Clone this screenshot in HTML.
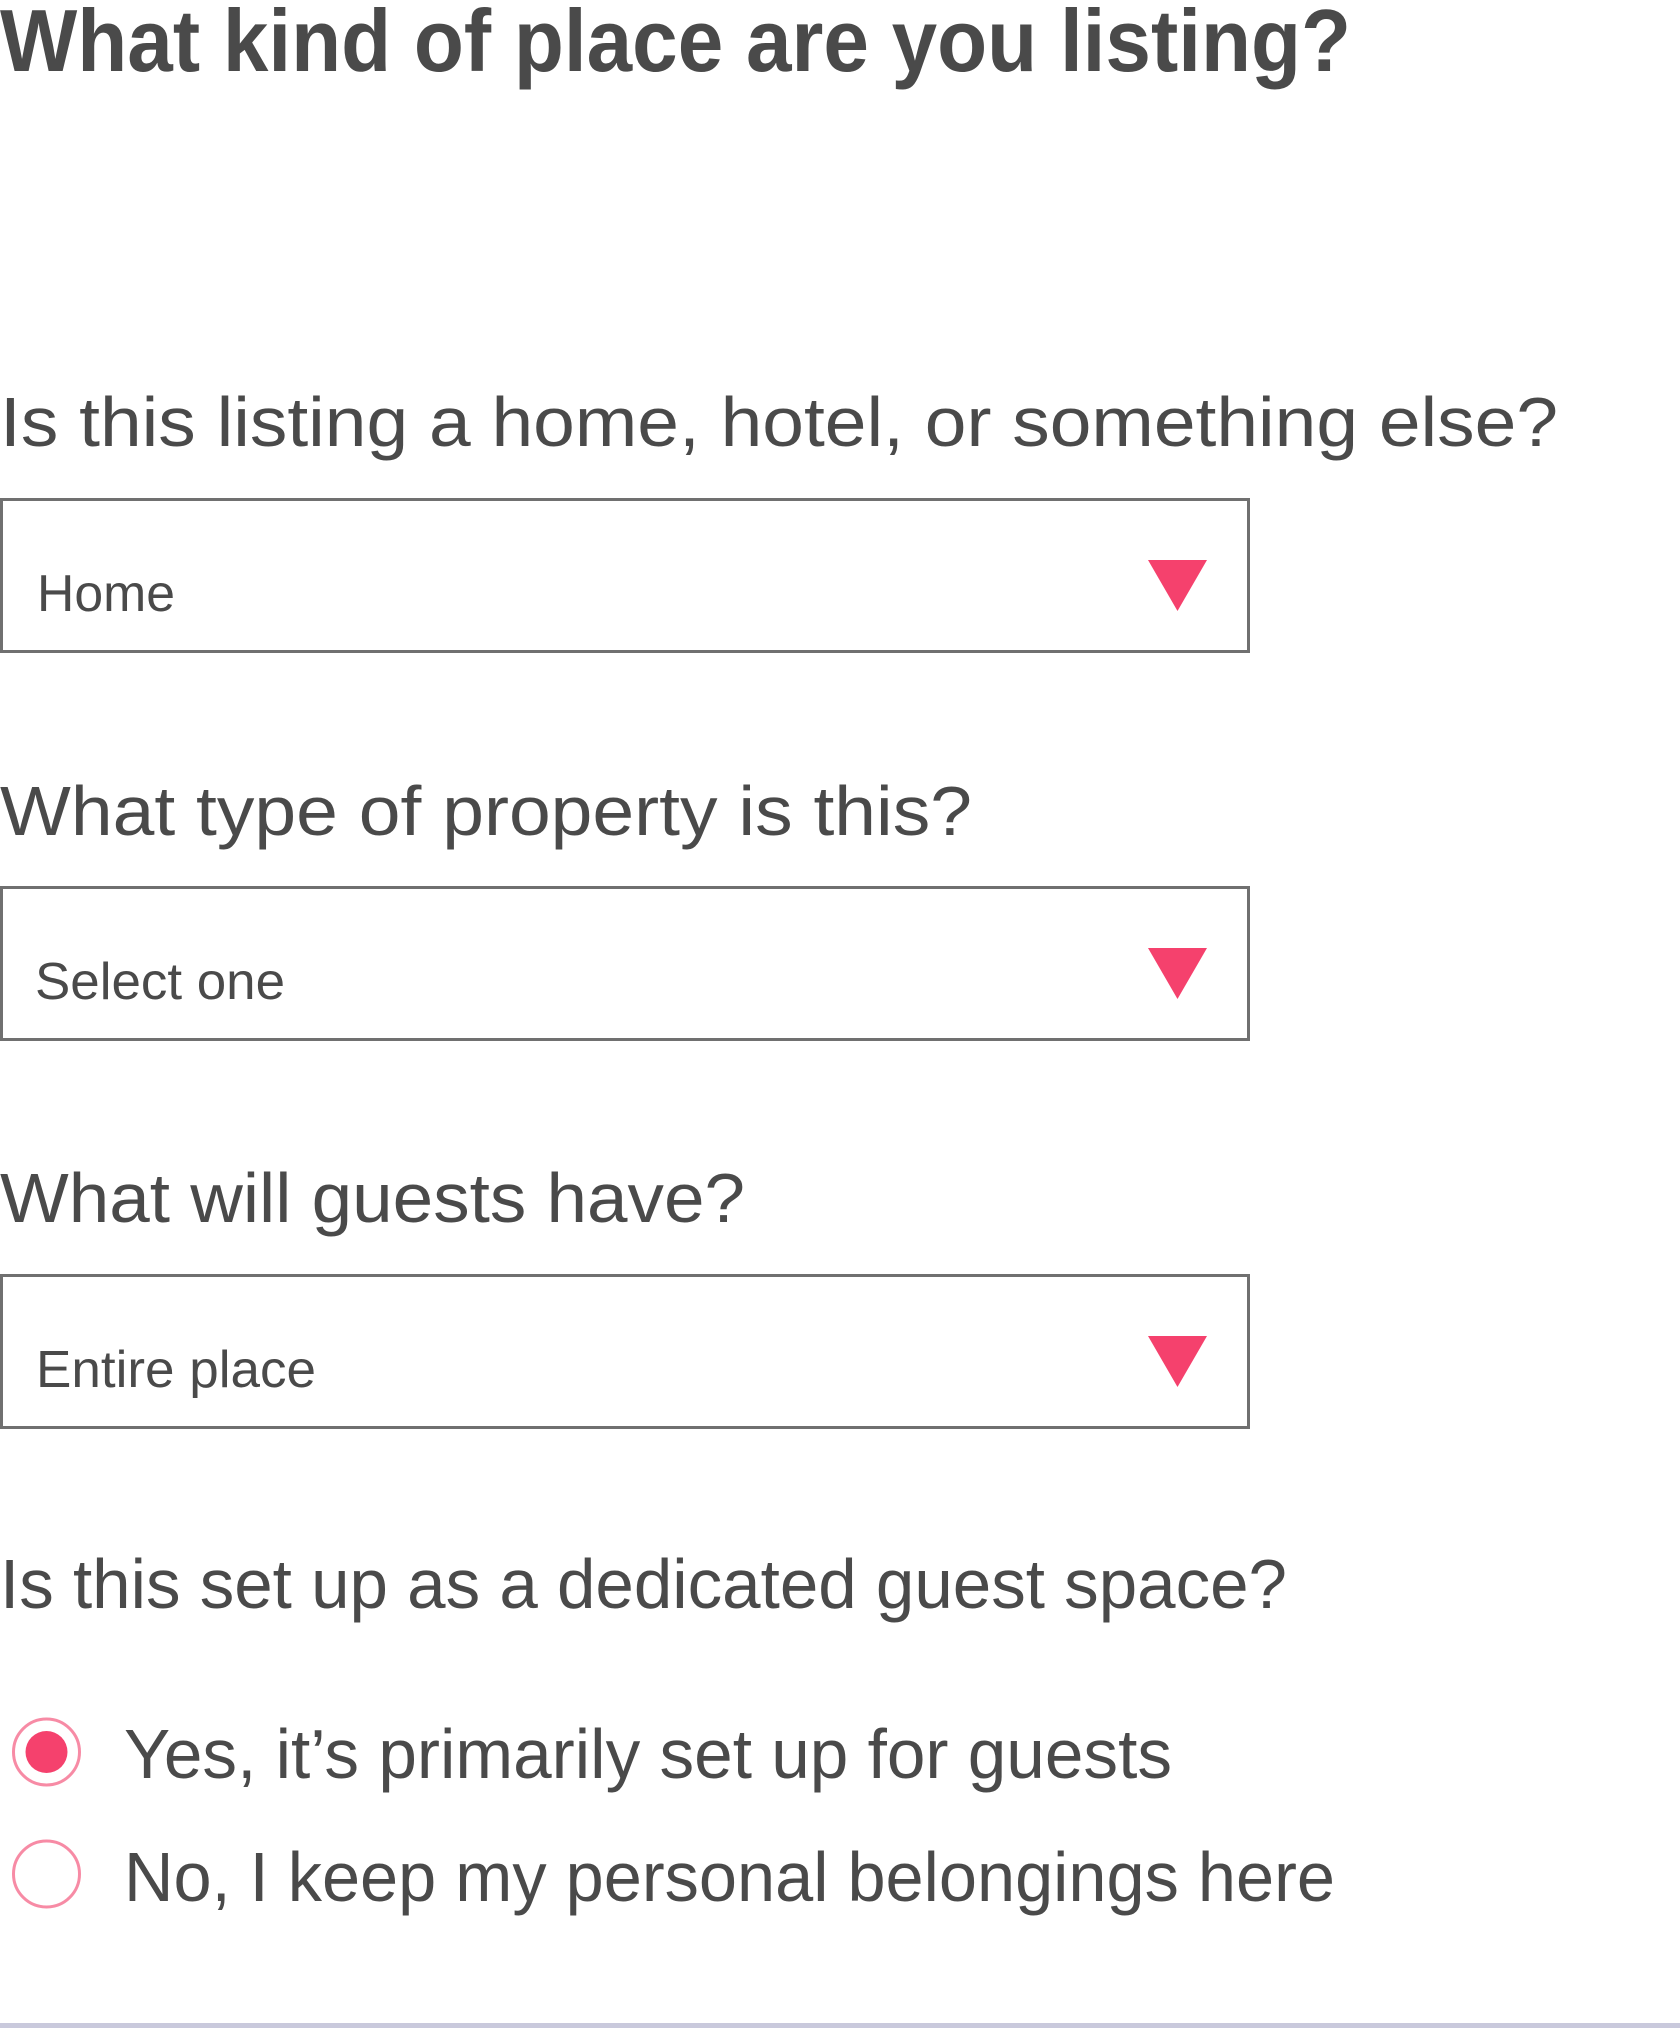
<!DOCTYPE html>
<html><head><meta charset="utf-8"><style>
html,body{margin:0;padding:0;background:#fff;width:1680px;height:2028px;overflow:hidden}
svg{display:block}
text{font-family:"Liberation Sans",sans-serif;fill:#4a4a4a}
</style></head><body>
<svg width="1680" height="2028" viewBox="0 0 1680 2028" xmlns="http://www.w3.org/2000/svg">
<text x="0" y="71" font-size="88" font-weight="bold" textLength="1351" lengthAdjust="spacingAndGlyphs">What kind of place are you listing?</text>

<text x="0" y="446" font-size="70" textLength="1558" lengthAdjust="spacingAndGlyphs">Is this listing a home, hotel, or something else?</text>
<rect x="1.5" y="499.5" width="1247" height="152" fill="#fff" stroke="#707070" stroke-width="3"/>
<text x="37" y="611" font-size="52" textLength="138" lengthAdjust="spacingAndGlyphs">Home</text>
<polygon points="1148,560 1207,560 1177.5,611" fill="#f5416d"/>

<text x="0" y="835" font-size="70" textLength="972" lengthAdjust="spacingAndGlyphs">What type of property is this?</text>
<rect x="1.5" y="887.5" width="1247" height="152" fill="#fff" stroke="#707070" stroke-width="3"/>
<text x="35" y="999" font-size="52" textLength="250" lengthAdjust="spacingAndGlyphs">Select one</text>
<polygon points="1148,948 1207,948 1177.5,999" fill="#f5416d"/>

<text x="0" y="1222" font-size="70" textLength="745" lengthAdjust="spacingAndGlyphs">What will guests have?</text>
<rect x="1.5" y="1275.5" width="1247" height="152" fill="#fff" stroke="#707070" stroke-width="3"/>
<text x="36" y="1387" font-size="52" textLength="280" lengthAdjust="spacingAndGlyphs">Entire place</text>
<polygon points="1148,1336 1207,1336 1177.5,1387" fill="#f5416d"/>

<text x="0" y="1608" font-size="70" textLength="1287" lengthAdjust="spacingAndGlyphs">Is this set up as a dedicated guest space?</text>

<circle cx="46.5" cy="1752" r="33" fill="#fff" stroke="#f78ba5" stroke-width="3"/>
<circle cx="46.5" cy="1752" r="21" fill="#f5416d"/>
<text x="124" y="1778" font-size="70" textLength="1048" lengthAdjust="spacingAndGlyphs">Yes, it’s primarily set up for guests</text>

<circle cx="46.5" cy="1874" r="33" fill="#fff" stroke="#f78ba5" stroke-width="3"/>
<text x="124" y="1901" font-size="70" textLength="1211" lengthAdjust="spacingAndGlyphs">No, I keep my personal belongings here</text>

<rect x="0" y="2023" width="1680" height="5" fill="#c9c9dc"/>
</svg>
</body></html>
